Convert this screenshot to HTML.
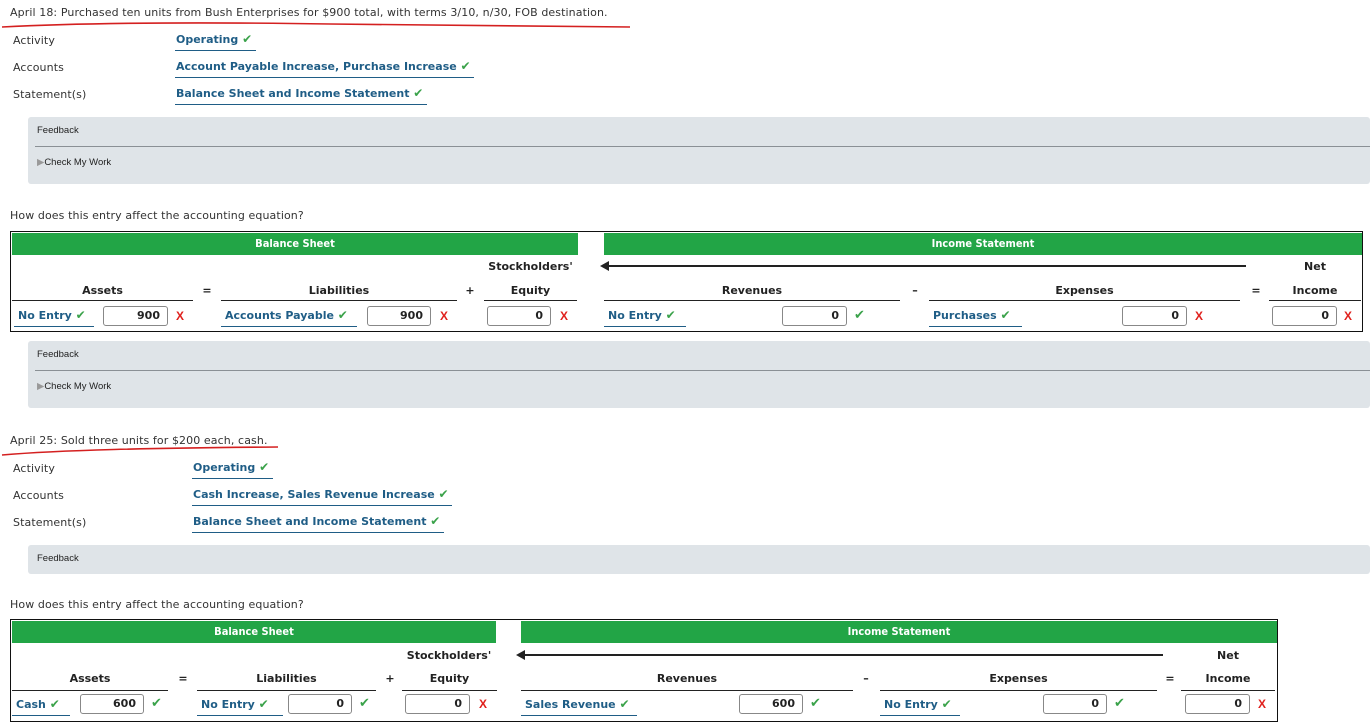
<!DOCTYPE html>
<html><head><meta charset="utf-8"><style>
*{margin:0;padding:0;box-sizing:border-box}
body{width:1370px;height:725px;background:#fff;position:relative;overflow:hidden;font-family:"DejaVu Sans","Liberation Sans",sans-serif;color:#333}
.t{position:absolute;white-space:nowrap;font-size:11px;line-height:14px;letter-spacing:0.1px}
.v{position:absolute;white-space:nowrap;font-size:11px;line-height:14px;font-weight:bold;color:#1f5d86;border-bottom:1px solid #1f5d86;padding:0 0 3px 1px}
.v2{position:absolute;white-space:nowrap;font-size:11px;line-height:14px;font-weight:bold;color:#1f5d86;border-bottom:1px solid #1f5d86;padding:0 0 3px 4px;height:19px}
.ck{color:#3aa24a;font-weight:normal;font-size:12px}
.x{position:absolute;color:#e0201c;font-weight:bold;font-size:12px;line-height:14px;font-family:"Liberation Sans",sans-serif}
.cm{position:absolute;color:#3aa24a;font-size:13px;line-height:14px}
.fb{position:absolute;left:28px;right:0;background:#dfe4e8;border-radius:3px}
.fb .a{position:absolute;left:9px;font-family:"Liberation Sans",sans-serif;font-size:9.5px;color:#222}
.fb .ln{position:absolute;left:7px;right:0;height:1px;background:#8a9095}
.box{position:absolute;border:1px solid #111}
.g{position:absolute;background:#22a546;color:#fff;font-weight:bold;font-size:11px;line-height:22px;text-align:center;font-family:"DejaVu Sans Condensed","DejaVu Sans",sans-serif}
.h{position:absolute;font-weight:bold;font-size:11px;line-height:14px;text-align:center;color:#222;white-space:nowrap}
.ul{position:absolute;height:1px;background:#222}
.in{position:absolute;height:20px;border:1px solid #888;border-radius:3px;background:#fff;font-size:11px;font-weight:bold;text-align:right;padding-right:7px;line-height:18px;color:#222}
.arr{position:absolute;height:2px;background:#222}
.arr:before{content:"";position:absolute;left:-2px;top:-4px;border-right:9px solid #222;border-top:5px solid transparent;border-bottom:5px solid transparent}
</style></head><body>

<div class="t" style="left:10px;top:6px">April 18: Purchased ten units from Bush Enterprises for $900 total, with terms 3/10, n/30, FOB destination.</div>
<svg style="position:absolute;left:0;top:18px" width="640" height="14"><path d="M2 9 C80 5,200 4,330 6 C450 7,560 9,630 9" stroke="#d42020" stroke-width="1.6" fill="none"/></svg>
<div class="t" style="left:13px;top:34px">Activity</div>
<div class="t" style="left:13px;top:61px">Accounts</div>
<div class="t" style="left:13px;top:88px">Statement(s)</div>
<div class="v" style="left:175px;top:32px">Operating <span class="ck">✔</span>&nbsp;</div>
<div class="v" style="left:175px;top:59px">Account Payable Increase, Purchase Increase <span class="ck">✔</span>&nbsp;</div>
<div class="v" style="left:175px;top:86px">Balance Sheet and Income Statement <span class="ck">✔</span>&nbsp;</div>

<div class="fb" style="top:117px;height:67px"><div class="a" style="top:8px">Feedback</div><div class="ln" style="top:29px"></div><div class="a" style="top:40px"><span style="color:#999">▶</span>Check My Work</div></div>

<div class="t" style="left:10px;top:209px">How does this entry affect the accounting equation?</div>

<div class="box" style="left:10px;top:231px;width:1353px;height:101px"></div>
<div class="g" style="left:12px;top:233px;width:566px;height:22px">Balance Sheet</div>
<div class="g" style="left:604px;top:233px;width:758px;height:22px">Income Statement</div>
<div class="h" style="left:484px;top:260px;width:93px">Stockholders'</div>
<div class="arr" style="left:602px;top:265px;width:644px"></div>
<div class="h" style="left:1269px;top:260px;width:92px">Net</div>
<div class="h" style="left:12px;top:284px;width:181px">Assets</div>
<div class="h" style="left:197px;top:284px;width:20px">=</div>
<div class="h" style="left:221px;top:284px;width:236px">Liabilities</div>
<div class="h" style="left:460px;top:284px;width:20px">+</div>
<div class="h" style="left:484px;top:284px;width:93px">Equity</div>
<div class="h" style="left:604px;top:284px;width:296px">Revenues</div>
<div class="h" style="left:905px;top:284px;width:20px">–</div>
<div class="h" style="left:929px;top:284px;width:311px">Expenses</div>
<div class="h" style="left:1246px;top:284px;width:20px">=</div>
<div class="h" style="left:1269px;top:284px;width:92px">Income</div>
<div class="ul" style="left:12px;top:300px;width:181px"></div>
<div class="ul" style="left:221px;top:300px;width:236px"></div>
<div class="ul" style="left:484px;top:300px;width:93px"></div>
<div class="ul" style="left:604px;top:300px;width:296px"></div>
<div class="ul" style="left:929px;top:300px;width:311px"></div>
<div class="ul" style="left:1269px;top:300px;width:92px"></div>

<div class="v2" style="left:14px;top:308px;width:80px">No Entry <span class="ck">✔</span></div>
<div class="in" style="left:103px;top:306px;width:65px">900</div><div class="x" style="left:176px;top:309px">X</div>
<div class="v2" style="left:221px;top:308px;width:136px">Accounts Payable <span class="ck">✔</span></div>
<div class="in" style="left:367px;top:306px;width:64px">900</div><div class="x" style="left:440px;top:309px">X</div>
<div class="in" style="left:487px;top:306px;width:64px">0</div><div class="x" style="left:560px;top:309px">X</div>
<div class="v2" style="left:604px;top:308px;width:82px">No Entry <span class="ck">✔</span></div>
<div class="in" style="left:782px;top:306px;width:65px">0</div><div class="cm" style="left:854px;top:309px">✔</div>
<div class="v2" style="left:929px;top:308px;width:93px">Purchases <span class="ck">✔</span></div>
<div class="in" style="left:1122px;top:306px;width:65px">0</div><div class="x" style="left:1195px;top:309px">X</div>
<div class="in" style="left:1272px;top:306px;width:65px">0</div><div class="x" style="left:1344px;top:309px">X</div>

<div class="fb" style="top:341px;height:67px"><div class="a" style="top:8px">Feedback</div><div class="ln" style="top:29px"></div><div class="a" style="top:40px"><span style="color:#999">▶</span>Check My Work</div></div>

<div class="t" style="left:10px;top:434px">April 25: Sold three units for $200 each, cash.</div>
<svg style="position:absolute;left:0;top:444px" width="290" height="14"><path d="M2 11 C60 6,150 4,278 3" stroke="#d42020" stroke-width="1.6" fill="none"/></svg>
<div class="t" style="left:13px;top:462px">Activity</div>
<div class="t" style="left:13px;top:489px">Accounts</div>
<div class="t" style="left:13px;top:516px">Statement(s)</div>
<div class="v" style="left:192px;top:460px">Operating <span class="ck">✔</span>&nbsp;</div>
<div class="v" style="left:192px;top:487px">Cash Increase, Sales Revenue Increase <span class="ck">✔</span>&nbsp;</div>
<div class="v" style="left:192px;top:514px">Balance Sheet and Income Statement <span class="ck">✔</span>&nbsp;</div>

<div class="fb" style="top:545px;height:29px"><div class="a" style="top:8px">Feedback</div></div>

<div class="t" style="left:10px;top:598px">How does this entry affect the accounting equation?</div>

<div class="box" style="left:10px;top:619px;width:1268px;height:103px"></div>
<div class="g" style="left:12px;top:621px;width:484px;height:22px">Balance Sheet</div>
<div class="g" style="left:521px;top:621px;width:756px;height:22px">Income Statement</div>
<div class="h" style="left:400px;top:649px;width:98px">Stockholders'</div>
<div class="arr" style="left:518px;top:654px;width:645px"></div>
<div class="h" style="left:1181px;top:649px;width:94px">Net</div>
<div class="h" style="left:12px;top:672px;width:156px">Assets</div>
<div class="h" style="left:173px;top:672px;width:20px">=</div>
<div class="h" style="left:197px;top:672px;width:179px">Liabilities</div>
<div class="h" style="left:380px;top:672px;width:20px">+</div>
<div class="h" style="left:402px;top:672px;width:95px">Equity</div>
<div class="h" style="left:521px;top:672px;width:332px">Revenues</div>
<div class="h" style="left:856px;top:672px;width:20px">–</div>
<div class="h" style="left:880px;top:672px;width:277px">Expenses</div>
<div class="h" style="left:1160px;top:672px;width:20px">=</div>
<div class="h" style="left:1181px;top:672px;width:94px">Income</div>
<div class="ul" style="left:12px;top:690px;width:156px"></div>
<div class="ul" style="left:197px;top:690px;width:179px"></div>
<div class="ul" style="left:402px;top:690px;width:95px"></div>
<div class="ul" style="left:521px;top:690px;width:332px"></div>
<div class="ul" style="left:880px;top:690px;width:277px"></div>
<div class="ul" style="left:1181px;top:690px;width:94px"></div>

<div class="v2" style="left:12px;top:697px;width:58px">Cash <span class="ck">✔</span></div>
<div class="in" style="left:80px;top:694px;width:64px">600</div><div class="cm" style="left:151px;top:697px">✔</div>
<div class="v2" style="left:197px;top:697px;width:86px">No Entry <span class="ck">✔</span></div>
<div class="in" style="left:288px;top:694px;width:64px">0</div><div class="cm" style="left:359px;top:697px">✔</div>
<div class="in" style="left:405px;top:694px;width:65px">0</div><div class="x" style="left:479px;top:697px">X</div>
<div class="v2" style="left:521px;top:697px;width:116px">Sales Revenue <span class="ck">✔</span></div>
<div class="in" style="left:739px;top:694px;width:64px">600</div><div class="cm" style="left:810px;top:697px">✔</div>
<div class="v2" style="left:880px;top:697px;width:80px">No Entry <span class="ck">✔</span></div>
<div class="in" style="left:1043px;top:694px;width:64px">0</div><div class="cm" style="left:1114px;top:697px">✔</div>
<div class="in" style="left:1185px;top:694px;width:65px">0</div><div class="x" style="left:1258px;top:697px">X</div>

</body></html>
